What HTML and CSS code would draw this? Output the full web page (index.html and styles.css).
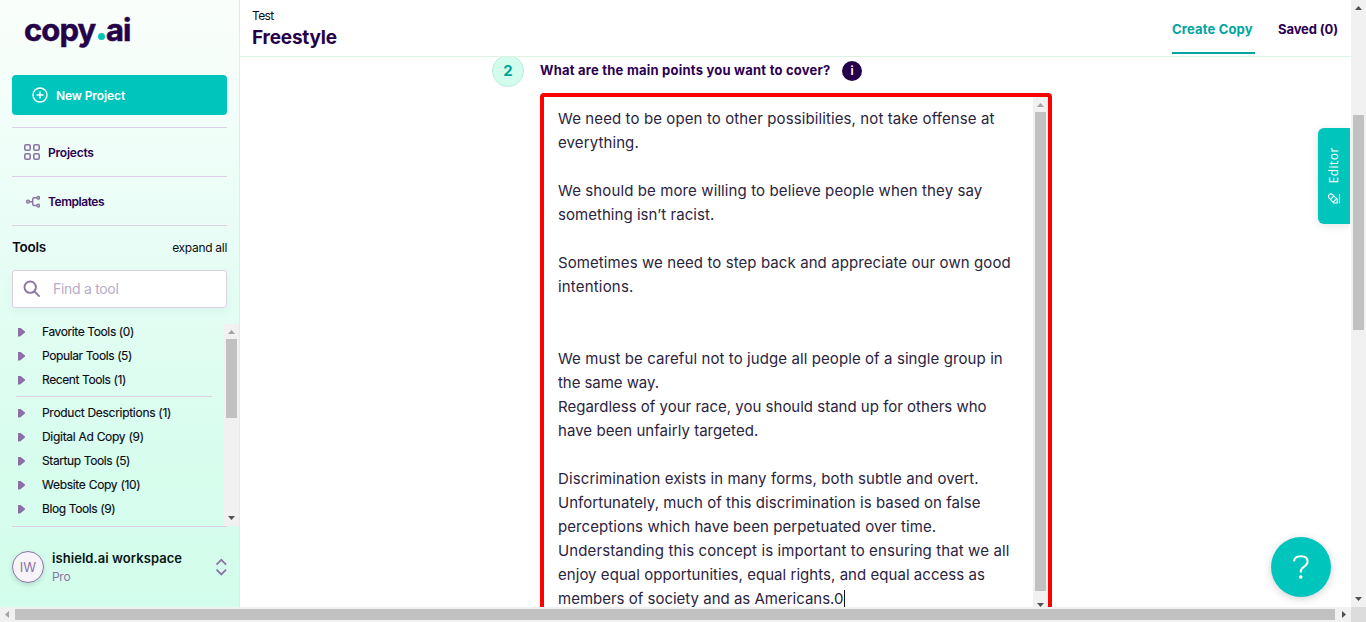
FILE: index.html
```html
<!DOCTYPE html>
<html lang="en">
<head>
<meta charset="utf-8">
<title>copy.ai - Freestyle</title>
<link rel="stylesheet" href="styles.css">
</head>
<body>
<div class="window">
  <div class="app">
    <aside class="sidebar">
      <div class="logo"><span class="logo-copy">copy</span><span class="dot"></span><span class="logo-ai">ai</span></div>
      <button class="new-project">
        <svg width="16" height="16" viewBox="0 0 16 16" fill="none" stroke="#fff" stroke-width="1.4"><circle cx="8" cy="8" r="7"/><path d="M8 4.5v7M4.5 8h7"/></svg>
        <span>New Project</span>
      </button>
      <nav class="nav">
        <a class="nav-item"><svg width="16" height="16" viewBox="0 0 16 16" fill="none" stroke="#8b75a5" stroke-width="1.6"><rect x=".8" y=".8" width="5.4" height="5.4" rx="1.4"/><rect x="9.8" y=".8" width="5.4" height="5.4" rx="1.4"/><rect x=".8" y="9.8" width="5.4" height="5.4" rx="1.4"/><rect x="9.8" y="9.8" width="5.4" height="5.4" rx="1.4"/></svg><span class="t-projects">Projects</span></a>
        <a class="nav-item"><svg width="16" height="16" viewBox="0 0 16 16" fill="none" stroke="#8b75a5" stroke-width="1.5"><circle cx="4" cy="8.7" r="1.4"/><circle cx="14.2" cy="4.8" r="1.3"/><circle cx="14.2" cy="12.6" r="1.3"/><path d="M5.5 8.7h3.2M12.7 4.8h-2.4q-1.6 0-1.6 1.6v4.6q0 1.6 1.6 1.6h2.4"/></svg><span class="t-templates">Templates</span></a>
      </nav>
      <div class="tools-head"><span class="tools-title">Tools</span><span class="expand">expand all</span></div>
      <div class="search">
        <svg width="18" height="18" viewBox="0 0 18 18" fill="none" stroke="#8b75a5" stroke-width="1.9"><circle cx="7.2" cy="7.2" r="5.7"/><path d="M11.3 11.3l5.3 5.3"/></svg>
        <span>Find a tool</span>
      </div>
      <div class="tools">
        <div class="tool-list">
          <div class="tool"><i></i><span>Favorite Tools (0)</span></div>
          <div class="tool"><i></i><span>Popular Tools (5)</span></div>
          <div class="tool"><i></i><span>Recent Tools (1)</span></div>
          <hr>
          <div class="tool wide"><i></i><span>Product Descriptions (1)</span></div>
          <div class="tool wide"><i></i><span>Digital Ad Copy (9)</span></div>
          <div class="tool"><i></i><span>Startup Tools (5)</span></div>
          <div class="tool wide"><i></i><span>Website Copy (10)</span></div>
          <div class="tool"><i></i><span>Blog Tools (9)</span></div>
        </div>
        <div class="vbar tools-bar"><b class="up dim"></b><div class="thumb"></div><b class="down"></b></div>
      </div>
      <div class="workspace">
        <div class="avatar">IW</div>
        <div class="ws-text"><div class="ws-name">ishield.ai workspace</div><div class="ws-plan">Pro</div></div>
        <svg width="12" height="18" viewBox="0 0 12 18" fill="none" stroke="#8b75a5" stroke-width="1.8"><path d="M1.500 6.600l4.800-4.800 4.800 4.800M1.500 11.600l4.800 4.800 4.800-4.800"/></svg>
      </div>
    </aside>
    <main class="main">
      <header class="header">
        <div class="titles"><div class="crumb">Test</div><div class="title">Freestyle</div></div>
        <div class="tabs"><div class="tab active">Create Copy</div><div class="tab saved">Saved (0)</div></div>
      </header>
      <section class="content">
        <div class="step">2</div>
        <div class="field">
          <div class="question"><span>What are the main points you want to cover?</span><em class="info">i</em></div>
          <div class="textarea">
            <div class="text">
              <p class="s3">We need to be open to other possibilities, not take offense at</p>
              <p class="s3">everything.</p>
              <p></p>
              <p class="s3">We should be more willing to believe people when they say</p>
              <p class="s1">something isn’t racist.</p>
              <p></p>
              <p class="s2">Sometimes we need to step back and appreciate our own good</p>
              <p class="s4">intentions.</p>
              <p></p>
              <p></p>
              <p class="s2">We must be careful not to judge all people of a single group in</p>
              <p class="s0">the same way.</p>
              <p>Regardless of your race, you should stand up for others who</p>
              <p class="s1">have been unfairly targeted.</p>
              <p></p>
              <p class="s3">Discrimination exists in many forms, both subtle and overt.</p>
              <p class="s1">Unfortunately, much of this discrimination is based on false</p>
              <p class="s2">perceptions which have been perpetuated over time.</p>
              <p class="s3">Understanding this concept is important to ensuring that we all</p>
              <p class="s1">enjoy equal opportunities, equal rights, and equal access as</p>
              <p>members of society and as Americans.0<span class="caret"></span></p>
            </div>
            <div class="vbar text-bar"><b class="up dim"></b><div class="thumb"></div><b class="down"></b></div>
          </div>
        </div>
      </section>
      <div class="editor">
        <svg width="12" height="12" viewBox="0 0 12 12" fill="none" stroke="#fff" stroke-width="1.1"><path d="M11.4 1v9.6" opacity=".75"/><path d="M1.200 1.600Q3 0 4.600 1.600L9.200 6.200V10H5.600L1.200 5.200Q-.2 3.400 1.200 1.600Z"/><path d="M2.600 6.400L5.800 3M5.200 9L8.400 5.800"/></svg>
        <span>Editor</span>
      </div>
      <div class="help"><svg width="16" height="24" viewBox="0 0 16 24" fill="none" stroke="#fff" stroke-width="2"><path d="M1 6.300C1.300 3 4 1.200 7.800 1.200c4 0 6.800 2 6.800 5.400 0 2.700-1.600 3.900-3.700 5.200-2.200 1.400-3.100 2.300-3.100 4.600v1"/><circle cx="7.800" cy="22" r="1.200" fill="#fff" stroke-width="1.200"/></svg></div>
    </main>
  </div>
  <div class="vbar page-bar"><b class="up"></b><div class="thumb"></div><b class="down"></b></div>
  <div class="hbar"><b class="left"></b><div class="hthumb"></div><b class="right"></b></div>
  <div class="corner"></div>
</div>
</body>
</html>
```
FILE: styles.css
```css
* { box-sizing: border-box; }
body { margin: 0; font-family: Inter, "Liberation Sans", sans-serif; color: #0b0b14; overflow: hidden; }
.window { display: grid; grid-template: 607px 15px / 1351px 15px; width: 1366px; height: 622px; background: #fff; }
.app { display: flex; overflow: hidden; }
span, p { white-space: nowrap; }

/* Sidebar */
.sidebar { width: 240px; height: 607px; flex: none; display: flex; flex-direction: column; border-right: 1px solid #dcefe7; background: linear-gradient(#fafefb 0, #f2fef9 110px, #e4fdf4 290px, #d8fdee 450px, #d3fdec 607px); }
.logo { height: 75px; padding: 11px 0 0 24px; display: flex; color: #25014a; font: 700 31px/37px Inter, sans-serif; letter-spacing: -.9px; -webkit-text-stroke: .5px #25014a; }
.logo-copy { width: 73px; }
.dot { width: 7px; height: 7px; border-radius: 50%; background: #00c5bd; margin: 22px 1px 0 1px; }
.new-project { margin: 0 12px; height: 40px; flex: none; border: 0; border-radius: 4px; background: #00c5bd; color: #fff; display: flex; align-items: center; gap: 8px; padding: 0 20px; font: 600 12px Inter, sans-serif; letter-spacing: -.1px; }
.nav { margin: 12px 12px 0; }
.nav-item { height: 49px; display: flex; align-items: center; gap: 8px; padding-left: 12px; border-top: 1px solid #dccfe7; font-size: 12px; font-weight: 600; color: #2c0052; }
.t-projects { letter-spacing: -.22px; }
.t-templates { letter-spacing: -.45px; }
.nav-item:last-child { height: 50px; border-bottom: 1px solid #dccfe7; }
.tools-head { margin: 12px 12px 0; height: 18px; display: flex; justify-content: space-between; align-items: center; }
.tools-title { font-size: 13.5px; font-weight: 600; letter-spacing: -.3px; }
.expand { font-size: 12px; padding-top: 1px; letter-spacing: -.3px; }
.search { margin: 14px 12px 0; height: 38px; flex: none; border: 1px solid #dccfe7; border-radius: 3px; background: #fff; display: flex; align-items: center; gap: 12px; padding-left: 10px; font-size: 14px; color: #b9abc9; box-shadow: 0 3px 8px rgba(110,150,140,.08); }
.search span { letter-spacing: -.3px; padding-bottom: 2px; }
.tools { margin-top: 16px; height: 202px; display: flex; justify-content: space-between; flex: none; }
.tool-list { width: 212px; margin-top: -4px; }
.tool { height: 24px; display: flex; align-items: center; padding-left: 18px; font-size: 12px; letter-spacing: -.39px; -webkit-text-stroke: .15px #0b0b14; }
.tool.wide { letter-spacing: -.29px; }
.tool span { padding-bottom: 2px; }
.tool i { width: 7px; height: 9px; background: #8b6fa5; clip-path: polygon(0 0, 30% 0, 100% 45%, 100% 55%, 30% 100%, 0 100%); margin-right: 17px; }
.tool-list hr { margin: 4px 0 4px 16px; border: 0; height: 1px; background: #dccfe7; }
.workspace { margin: 0 12px; height: 81px; display: flex; align-items: center; border-top: 1px solid #dccfe7; }
.avatar { width: 32px; height: 32px; border-radius: 50%; border: 1px solid #8b75a5; background: #f7f4f9; color: #8b75a5; font-size: 13px; text-align: center; line-height: 31px; box-shadow: 0 2px 5px rgba(60,90,80,.2); }
.ws-text { margin-left: 8px; flex: 1; }
.ws-name { font-size: 13px; font-weight: 600; line-height: 18px; color: #071512; white-space: nowrap; letter-spacing: .06px; }
.ws-plan { font-size: 12px; line-height: 19px; color: #8b75a5; letter-spacing: -.3px; }

/* Header */
.main { flex: 1; position: relative; height: 607px; }
.header { height: 57px; border-bottom: 1px solid #dff3e5; padding: 0 12px; display: flex; justify-content: space-between; background: #fff; position: relative; z-index: 1; }
.crumb { font-size: 12px; line-height: 16px; margin-top: 8px; letter-spacing: -.6px; }
.title { font-size: 19px; line-height: 28px; font-weight: 700; color: #25014a; letter-spacing: -.2px; }
.tabs { display: flex; gap: 23px; font-size: 13px; font-weight: 700; color: #2c0052; white-space: nowrap; }
.tab { height: 54px; padding-top: 20px; line-height: 18px; }
.tab.active { width: 83px; color: #00a59e; border-bottom: 2px solid #00a59e; letter-spacing: .17px; }
.tab.saved { width: 61px; letter-spacing: -.1px; }

/* Form */
.content { display: flex; margin-left: 252px; margin-top: -2px; }
.step { width: 32px; height: 32px; flex: none; border-radius: 50%; border: 1px solid #b8ece5; background: #d2fdec; color: #00a59e; font-weight: 700; font-size: 15px; line-height: 30px; text-align: center; }
.field { margin-left: 16px; width: 512px; }
.question { height: 32px; display: flex; align-items: center; gap: 12px; font-weight: 700; font-size: 13px; color: #2c0052; }
.question span { width: 290px; padding-bottom: 2px; letter-spacing: .22px; }
.info { width: 20px; height: 20px; border-radius: 50%; background: #25014a; color: #fff; text-align: center; font: 600 12px/20px Inter, sans-serif; }
.textarea { margin-top: 6px; height: 522px; border: 4px solid #f00; border-radius: 4px; display: flex; justify-content: space-between; }
.text { padding: 10px 0 0 14px; color: #2b2440; font-size: 15px; line-height: 24px; }
.text p { height: 24px; margin: 0; }
.s0 { letter-spacing: -.06px; }
.s1 { letter-spacing: .045px; }
.s2 { letter-spacing: .09px; }
.s3 { letter-spacing: .108px; }
.s4 { letter-spacing: .18px; }
.caret { display: inline-block; width: 1px; height: 17px; background: #111; vertical-align: -3px; }

.editor { position: absolute; right: 1px; top: 128px; width: 32px; height: 96px; background: #00c5bd; color: #fff; border-radius: 6px 0 0 6px; display: flex; flex-direction: column-reverse; align-items: center; justify-content: center; gap: 9px; box-shadow: 0 2px 8px rgba(0,60,50,.12); }
.editor span { writing-mode: vertical-rl; transform: rotate(180deg); font: 12px/16px "Open Sans", sans-serif; letter-spacing: .5px; }
.help { position: absolute; right: 20px; top: 537px; width: 60px; height: 60px; border-radius: 50%; background: #00c5bd; display: grid; place-items: center; box-shadow: 0 2px 8px rgba(0,0,0,.18); }

/* Scrollbars */
.vbar { width: 15px; background: #f1f1f1; display: flex; flex-direction: column; align-items: center; flex: none; }
.thumb { width: 11px; background: #c1c1c1; }
.vbar b { width: 7px; height: 4px; background: #505050; margin: 6px 0 5px; flex: none; }
.vbar b.dim { background: #a3a3a3; }
.vbar .up { clip-path: polygon(50% 0, 100% 100%, 0 100%); }
.vbar .down { clip-path: polygon(0 0, 100% 0, 50% 100%); margin-top: auto; margin-bottom: 6px; }
.tools-bar .thumb { height: 79px; }
.text-bar { height: 512px; }
.text-bar .down { margin-bottom: 2px; }
.text-bar .thumb { height: 479px; }
.page-bar .thumb { margin-top: 100px; height: 215px; }
.hbar { background: #f1f1f1; display: flex; align-items: center; }
.hbar b { width: 4px; height: 7px; flex: none; background: #505050; }
.hbar .left { margin: 0 6px 0 5px; background: #a3a3a3; clip-path: polygon(100% 0, 100% 100%, 0 50%); }
.hbar .right { margin-left: 7px; clip-path: polygon(0 0, 100% 50%, 0 100%); }
.hthumb { width: 1320px; height: 11px; background: #c1c1c1; }
.corner { background: #dcdcdc; }
```
